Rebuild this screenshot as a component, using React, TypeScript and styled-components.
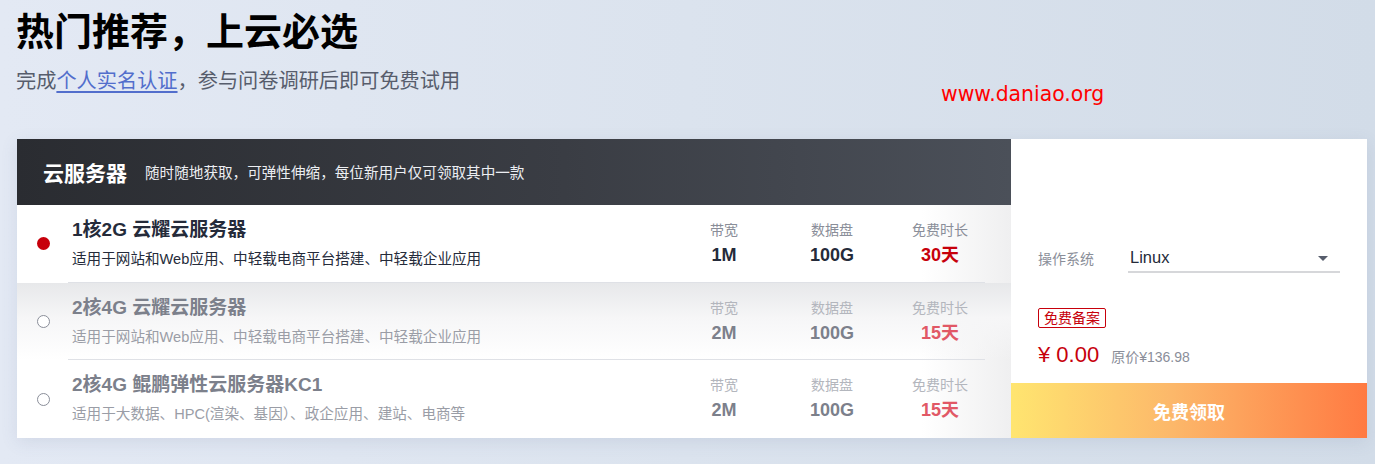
import React from "react";
import styled, { createGlobalStyle } from "styled-components";

const GlobalStyle = createGlobalStyle`
  html, body { margin: 0; padding: 0; }
  body {
    width: 1375px;
    height: 464px;
    overflow: hidden;
    font-family: "Liberation Sans", "Noto Sans CJK SC", sans-serif;
    background: linear-gradient(90deg, #e3e9f4 0%, #dbe3ee 50%, #d2dce8 100%);
  }
`;

const Page = styled.div`
  position: relative;
  padding: 9px 8px 0 16px;
  height: 464px;
  box-sizing: border-box;
`;

const Heading = styled.h1`
  margin: 0;
  font-size: 38px;
  line-height: 46px;
  font-weight: 700;
  color: #000;
`;

const Sub = styled.p`
  margin: 12px 0 0;
  font-size: 20.2px;
  line-height: 28px;
  color: #575d6c;
`;

const Link = styled.a`
  color: #526ecc;
  text-decoration: underline;
  text-underline-offset: 3px;
`;

const Watermark = styled.span`
  position: absolute;
  left: 941px;
  top: 80px;
  font-family: "DejaVu Sans", sans-serif;
  font-size: 20.4px;
  line-height: 28px;
  color: #ff0000;
`;

const Card = styled.div`
  margin: 44px 0 0 1px;
  width: 1350px;
  height: 299px;
  display: flex;
  background: #fff;
  box-shadow: 0 4px 16px rgba(80, 100, 140, 0.12);
`;

const Left = styled.div`
  width: 994px;
  display: flex;
  flex-direction: column;
  background: linear-gradient(90deg, #fff 0%, #fff 91%, #efeff0 100%);
`;

const DarkHeader = styled.div`
  height: 66px;
  display: flex;
  align-items: center;
  padding-left: 26px;
  background: linear-gradient(90deg, #2a2c31 0%, #3a3d44 55%, #4b5059 100%);
  color: #fff;
`;

const HeaderTitle = styled.span`
  font-size: 21px;
  font-weight: 700;
`;

const HeaderSub = styled.span`
  margin-left: 18px;
  font-size: 14.6px;
  color: #eceef2;
`;

const Row = styled.div<{ $shade?: boolean }>`
  height: 78px;
  display: flex;
  background: ${(p) =>
    p.$shade
      ? "linear-gradient(180deg, #e7e8ea 0%, #f6f6f7 45%, rgba(255,255,255,0) 100%)"
      : "transparent"};
`;

const RadioCol = styled.div`
  width: 50px;
  display: flex;
  align-items: center;
  justify-content: center;
  padding-left: 1px;
`;

const Radio = styled.span<{ $on?: boolean }>`
  width: 13px;
  height: 13px;
  border-radius: 50%;
  box-sizing: border-box;
  background: ${(p) => (p.$on ? "#c7000b" : "#fff")};
  border: ${(p) => (p.$on ? "none" : "1px solid #8a8e99")};
`;

const RowBody = styled.div<{ $line?: boolean }>`
  width: 917px;
  display: flex;
  align-items: stretch;
  border-bottom: ${(p) => (p.$line ? "1px solid #dfe1e6" : "none")};
`;

const Info = styled.div`
  flex: 1;
  padding: 13px 0 0 4px;
`;

const Title = styled.div<{ $muted?: boolean }>`
  font-size: 19px;
  line-height: 24px;
  font-weight: 700;
  color: ${(p) => (p.$muted ? "#7c808b" : "#252b3a")};
`;

const Desc = styled.div<{ $muted?: boolean }>`
  margin-top: 7px;
  font-size: 14.6px;
  line-height: 20px;
  color: ${(p) => (p.$muted ? "#9a9da6" : "#252b3a")};
`;

const Specs = styled.div`
  display: flex;
  gap: 18px;
  padding-top: 15px;
`;

const Spec = styled.div`
  width: 90px;
  text-align: center;
`;

const SpecLabel = styled.div<{ $muted?: boolean }>`
  font-size: 14px;
  line-height: 20px;
  color: ${(p) => (p.$muted ? "#b3b6bd" : "#8a8e99")};
`;

const SpecValue = styled.div<{ $tone: "dark" | "red" | "grey" | "pink" }>`
  margin-top: 3px;
  font-size: 18px;
  line-height: 24px;
  font-weight: 700;
  color: ${(p) =>
    p.$tone === "dark"
      ? "#252b3a"
      : p.$tone === "red"
      ? "#c7000b"
      : p.$tone === "grey"
      ? "#7c808b"
      : "#e15866"};
`;

const Right = styled.div`
  width: 356px;
  display: flex;
  flex-direction: column;
  padding-top: 104px;
  box-sizing: border-box;
  background: #fff;
`;

const FormRow = styled.div`
  display: flex;
  align-items: center;
  padding-left: 27px;
`;

const FieldLabel = styled.span`
  width: 90px;
  font-size: 14px;
  color: #8a8e99;
`;

const Select = styled.div`
  width: 212px;
  height: 30px;
  display: flex;
  align-items: center;
  justify-content: space-between;
  padding: 0 12px 0 2px;
  box-sizing: border-box;
  border-bottom: 2px solid #d6d7da;
  font-size: 16.5px;
  color: #252b3a;
`;

const Caret = styled.span`
  width: 0;
  height: 0;
  border-left: 5px solid transparent;
  border-right: 5px solid transparent;
  border-top: 5px solid #575d6c;
  margin-top: 2px;
`;

const Tag = styled.span`
  align-self: flex-start;
  margin: 35px 0 0 27px;
  height: 20px;
  padding: 0 5px;
  box-sizing: border-box;
  border: 1px solid #c7000b;
  border-radius: 2px;
  font-size: 14px;
  line-height: 18px;
  color: #c7000b;
`;

const PriceRow = styled.div`
  display: flex;
  align-items: baseline;
  margin: 13px 0 0 27px;
`;

const Price = styled.span`
  font-size: 22px;
  line-height: 28px;
  color: #c7000b;
`;

const OrigPrice = styled.span`
  margin-left: 12px;
  font-size: 14px;
  color: #8a8e99;
`;

const ClaimButton = styled.button`
  margin-top: auto;
  height: 55px;
  border: none;
  background: linear-gradient(90deg, #ffe570 0%, #fcb86a 45%, #ff7a42 100%);
  color: #fff;
  font-family: "Liberation Sans", "Noto Sans CJK SC", sans-serif;
  font-size: 18px;
  font-weight: 700;
  cursor: pointer;
`;

type Item = {
  title: string;
  desc: string;
  bw: string;
  disk: string;
  days: string;
  on?: boolean;
  shade?: boolean;
};

const items: Item[] = [
  {
    title: "1核2G 云耀云服务器",
    desc: "适用于网站和Web应用、中轻载电商平台搭建、中轻载企业应用",
    bw: "1M",
    disk: "100G",
    days: "30天",
    on: true,
  },
  {
    title: "2核4G 云耀云服务器",
    desc: "适用于网站和Web应用、中轻载电商平台搭建、中轻载企业应用",
    bw: "2M",
    disk: "100G",
    days: "15天",
    shade: true,
  },
  {
    title: "2核4G 鲲鹏弹性云服务器KC1",
    desc: "适用于大数据、HPC(渲染、基因）、政企应用、建站、电商等",
    bw: "2M",
    disk: "100G",
    days: "15天",
  },
];

export default function App() {
  return (
    <>
      <GlobalStyle />
      <Page>
        <Heading>热门推荐，上云必选</Heading>
        <Sub>
          完成<Link href="#">个人实名认证</Link>，参与问卷调研后即可免费试用
        </Sub>
        <Watermark>www.daniao.org</Watermark>
        <Card>
          <Left>
            <DarkHeader>
              <HeaderTitle>云服务器</HeaderTitle>
              <HeaderSub>随时随地获取，可弹性伸缩，每位新用户仅可领取其中一款</HeaderSub>
            </DarkHeader>
            {items.map((it, i) => {
              const muted = !it.on;
              return (
                <Row key={i} $shade={it.shade}>
                  <RadioCol>
                    <Radio $on={it.on} />
                  </RadioCol>
                  <RowBody $line={i < items.length - 1}>
                    <Info>
                      <Title $muted={muted}>{it.title}</Title>
                      <Desc $muted={muted}>{it.desc}</Desc>
                    </Info>
                    <Specs>
                      <Spec>
                        <SpecLabel $muted={muted}>带宽</SpecLabel>
                        <SpecValue $tone={muted ? "grey" : "dark"}>{it.bw}</SpecValue>
                      </Spec>
                      <Spec>
                        <SpecLabel $muted={muted}>数据盘</SpecLabel>
                        <SpecValue $tone={muted ? "grey" : "dark"}>{it.disk}</SpecValue>
                      </Spec>
                      <Spec>
                        <SpecLabel $muted={muted}>免费时长</SpecLabel>
                        <SpecValue $tone={muted ? "pink" : "red"}>{it.days}</SpecValue>
                      </Spec>
                    </Specs>
                  </RowBody>
                </Row>
              );
            })}
          </Left>
          <Right>
            <FormRow>
              <FieldLabel>操作系统</FieldLabel>
              <Select>
                <span>Linux</span>
                <Caret />
              </Select>
            </FormRow>
            <Tag>免费备案</Tag>
            <PriceRow>
              <Price>¥ 0.00</Price>
              <OrigPrice>原价¥136.98</OrigPrice>
            </PriceRow>
            <ClaimButton>免费领取</ClaimButton>
          </Right>
        </Card>
      </Page>
    </>
  );
}
